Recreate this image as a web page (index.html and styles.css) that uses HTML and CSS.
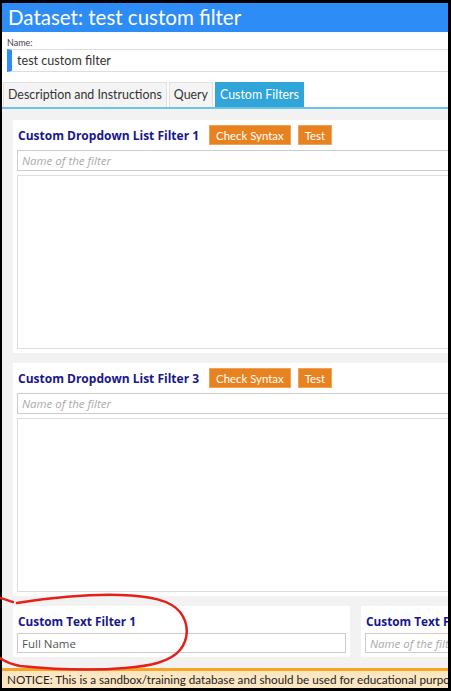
FILE: index.html
```html
<!DOCTYPE html>
<html lang="en">

<head>
    <meta charset="UTF-8" />
    <meta name="viewport" content="width=device-width, initial-scale=1.0" />
    <title>Dataset: test custom filter</title>
    <link rel="stylesheet" href="styles.css">
</head>

<body>
    <div class="window">
        <div class="title-bar">Dataset: test custom filter</div>

        <div class="name-field">
            <label for="dsName">Name:</label>
            <input type="text" id="dsName" class="name-input" value="test custom filter" />
        </div>

        <div class="tabs">
            <div class="tab">Description and Instructions</div>
            <div class="tab">Query</div>
            <div class="tab active">Custom Filters</div>
        </div>

        <div class="tab-body">
            <div class="panel">
                <div class="panel-head">
                    <span class="panel-title">Custom Dropdown List Filter 1</span>
                    <button class="btn">Check Syntax</button>
                    <button class="btn">Test</button>
                </div>
                <input type="text" class="filter-name" placeholder="Name of the filter" />
                <textarea class="filter-query"></textarea>
            </div>

            <div class="panel">
                <div class="panel-head">
                    <span class="panel-title">Custom Dropdown List Filter 3</span>
                    <button class="btn">Check Syntax</button>
                    <button class="btn">Test</button>
                </div>
                <input type="text" class="filter-name" placeholder="Name of the filter" />
                <textarea class="filter-query"></textarea>
            </div>

            <div class="text-filters">
                <div class="panel small">
                    <div class="panel-head">
                        <span class="panel-title">Custom Text Filter 1</span>
                    </div>
                    <input type="text" class="filter-name" value="Full Name" />
                </div>
                <div class="panel small">
                    <div class="panel-head">
                        <span class="panel-title">Custom Text Filter 2</span>
                    </div>
                    <input type="text" class="filter-name" placeholder="Name of the filter" />
                </div>
            </div>
        </div>

        <div class="notice">NOTICE: This is a sandbox/training database and should be used for educational purposes only.</div>
    </div>

    <!-- red pen mark round the first text filter -->
    <svg class="pen-mark" width="451" height="691" viewBox="0 0 451 691">
        <path d="M0,598 C5,599 9,601 13,602" />
        <path d="M17,603 C50,598 90,594 120,595 C150,596 170,600 180,612 C190,625 188,640 180,650 C170,662 150,666 125,668 C90,671 50,669 20,666 C10,664 4,661 0,658" />
    </svg>
</body>

</html>
```

FILE: styles.css
```css
body {
    margin: 0;
    padding: 0;
    background-color: #000;
    font-family: Lato, "Open Sans", sans-serif;
}

.window {
    margin: 3px 3px 3px 2px;
    width: 446px;
    height: 685px;
    overflow: hidden;
    background-color: #fff;
    display: flex;
    flex-direction: column;
}

.title-bar {
    height: 29px;
    flex-shrink: 0;
    background-color: #2e8cf6;
    color: #fff;
    font-size: 20.5px;
    line-height: 29px;
    padding-left: 6px;
    white-space: nowrap;
}

.name-field {
    height: 40px;
    flex-shrink: 0;
    padding-left: 5px;
}

.name-field label {
    display: block;
    height: 17px;
    font-size: 9px;
    line-height: 9px;
    padding-top: 6px;
    box-sizing: border-box;
    color: #4b3b4f;
}

.name-input {
    display: block;
    width: 460px;
    height: 23px;
    box-sizing: border-box;
    border: 1px solid #ddd;
    border-left: 5px solid #2e8cf6;
    padding: 0 0 0 5px;
    font-family: inherit;
    font-size: 12.6px;
    color: #333;
    outline: none;
}

.tabs {
    display: flex;
    flex-shrink: 0;
    margin-top: 10px;
    padding-left: 1px;
    gap: 2px;
    border-bottom: 2px solid #6cc3ea;
}

.tab {
    height: 25px;
    box-sizing: border-box;
    padding: 0 4px;
    font-size: 12.4px;
    line-height: 24px;
    color: #333;
    background-color: #f4f4f4;
    border: 1px solid #e0e0e0;
    border-bottom: none;
    white-space: nowrap;
}

.tab.active {
    background-color: #2fa5da;
    border-color: #2fa5da;
    color: #fff;
}

.tab-body {
    flex: 1;
    width: 700px;
    background-color: #f2f2f2;
    padding: 11px 0 0 11px;
    display: flex;
    flex-direction: column;
    gap: 10px;
}

.panel {
    background-color: #fff;
    padding: 0 4px 4px 4px;
    display: flex;
    flex-direction: column;
}

.panel-head {
    height: 30px;
    display: flex;
    align-items: center;
}

.panel-title {
    font-family: "Open Sans", sans-serif;
    color: #17178c;
    font-weight: bold;
    font-size: 12px;
    padding-left: 1px;
    margin-right: 10px;
    white-space: nowrap;
}

.btn {
    height: 20px;
    margin-right: 7px;
    padding: 0 6px;
    border: 1px solid #f0a358;
    background-color: #e8821f;
    color: #fff;
    font-family: inherit;
    font-size: 11.4px;
    line-height: 17px;
}

.filter-name {
    height: 21px;
    box-sizing: border-box;
    border: 1px solid #ccc;
    padding: 0 4px;
    font-family: "Open Sans", sans-serif;
    font-size: 11.5px;
    color: #555;
    outline: none;
}

.filter-name::placeholder {
    color: #aaa;
    font-style: italic;
}

.filter-query {
    margin-top: 4px;
    height: 174px;
    box-sizing: border-box;
    border: 1px solid #ddd;
    resize: none;
    outline: none;
}

.text-filters {
    display: flex;
    gap: 11px;
}

.panel.small {
    width: 337px;
    box-sizing: border-box;
}

.panel.small .panel-head {
    height: 27px;
    padding-top: 3px;
    box-sizing: border-box;
}

.panel.small .panel-title {
    font-size: 11.8px;
}

.panel.small .filter-name {
    height: 20px;
}

.notice {
    height: 20px;
    flex-shrink: 0;
    box-sizing: border-box;
    border-top: 3px solid #f6a327;
    background-color: #fde6c2;
    font-size: 11.7px;
    line-height: 17px;
    padding-left: 5px;
    color: #222;
    white-space: nowrap;
}

.pen-mark {
    position: absolute;
    top: 0;
    left: 0;
    pointer-events: none;
}

.pen-mark path {
    fill: none;
    stroke: #e3201c;
    stroke-width: 2.5;
    stroke-linecap: round;
}
```
